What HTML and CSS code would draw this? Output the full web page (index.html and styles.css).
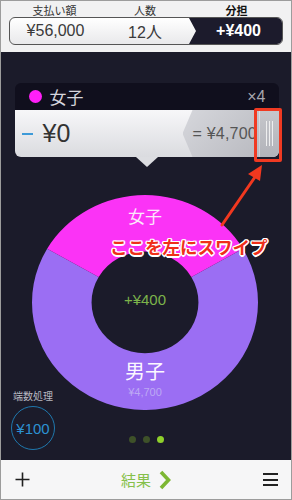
FILE: index.html
```html
<!DOCTYPE html>
<html lang="ja">
<head>
<meta charset="utf-8">
<link rel="stylesheet" href="styles.css">
</head>
<body>
<div class="app">
  <header class="top">
    <div class="labels"><span>支払い額</span><span>人数</span><span class="on">分担</span></div>
    <div class="seg">
      <div class="cell">¥56,000</div>
      <div class="cell">12人</div>
      <div class="cell dark">+¥400</div>
    </div>
  </header>
  <main class="main">
    <section class="card">
      <div class="card-head"><span class="dot"></span><span class="name">女子</span><span class="count">×4</span></div>
      <div class="card-row">
        <span class="minus"></span><span class="amount">¥0</span>
        <div class="share">= ¥4,700</div>
        <div class="handle"><i></i><i></i><i></i></div>
      </div>
    </section>
    <div class="donut">
      <svg class="ring" viewBox="-1 -1 2 2" preserveAspectRatio="none">
        <path fill="#9b6ef3" d="M -0.866 -0.5 L -0.41 -0.237 A 0.473 0.473 0 1 0 0.41 -0.237 L 0.866 -0.5 A 1 1 0 1 1 -0.866 -0.5 Z"/>
        <path fill="#fb33f6" d="M -0.866 -0.5 A 1 1 0 0 1 0.866 -0.5 L 0.41 -0.237 A 0.473 0.473 0 0 0 -0.41 -0.237 Z"/>
      </svg>
      <span class="lbl girls">女子</span>
      <span class="lbl center">+¥400</span>
      <span class="lbl boys">男子</span>
      <span class="lbl boys-amt">¥4,700</span>
    </div>
    <div class="dots"><i></i><i></i><i class="on"></i></div>
    <div class="rounding"><span class="rlabel">端数処理</span><span class="rcircle">¥100</span></div>
    <div class="hl-box"></div>
    <svg class="arrow" width="292" height="408" viewBox="0 0 292 408">
      <line x1="221" y1="173" x2="254" y2="125" stroke="#f2381f" stroke-width="3" stroke-linecap="round"/>
      <polygon points="261,113 259,129 247,122" fill="#f2381f"/>
    </svg>
    <div class="callout">ここを左にスワイプ</div>
  </main>
  <footer class="bar">
    <svg class="plus" width="15" height="15" viewBox="0 0 15 15"><path d="M7.5 0.5V14.5M0.5 7.5H14.5" stroke="#1f1f1f" stroke-width="1.6"/></svg>
    <div class="result"><span>結果</span><svg width="12" height="20" viewBox="0 0 12 20"><path d="M2 2L9.5 10L2 18" fill="none" stroke="#7db733" stroke-width="3.6"/></svg></div>
    <div class="menu"><i></i><i></i><i></i></div>
  </footer>
</div>
</body>
</html>
```
FILE: styles.css
```css
* { box-sizing: border-box; }
html, body { margin: 0; padding: 0; }
body {
  width: 292px; height: 500px;
  font-family: "Liberation Sans", "Noto Sans CJK JP", sans-serif;
  background: #fff;
}
.app {
  position: relative;
  width: 292px; height: 500px;
  border: 1px solid #9c9c9c;
  display: flex; flex-direction: column;
  overflow: hidden;
}
.top {
  height: 51px;
  background: #f1f1f2;
  padding: 2px 8px 0 8px;
}
.labels {
  display: grid;
  grid-template-columns: 91px 90px 1fr;
  height: 14px;
  font-family: "Noto Sans CJK JP", sans-serif;
  font-size: 11px; line-height: 14px;
  color: #333;
  text-align: center;
}
.labels .on { font-weight: 700; color: #111; }
.seg {
  height: 28px;
  border: 1px solid #555;
  border-radius: 6px;
  display: grid;
  grid-template-columns: 91px 88px 1fr;
  background: linear-gradient(#ffffff, #e9e9eb);
  overflow: hidden;
}
.cell {
  display: flex; align-items: center; justify-content: center;
  font-size: 16px; color: #3a3a3a;
}
.cell.dark {
  background: #1c1b2c;
  color: #fff;
  font-weight: 700;
  clip-path: polygon(0 0, 100% 0, 100% 100%, 0 100%, 7px 50%);
  padding-left: 6px;
}
.main {
  position: relative;
  flex: 1;
  background: #1b1b2a;
  display: flex; flex-direction: column; align-items: center;
}
.card {
  position: relative;
  margin-top: 31px;
  width: 264px;
  margin-left: 1px;
}
.card::after {
  content: "";
  position: absolute;
  left: 121px; top: 100%;
  border-left: 11px solid transparent;
  border-right: 11px solid transparent;
  border-top: 10px solid #dcdde1;
}
.card-head {
  height: 27px;
  background: #100f1d;
  border-radius: 6px 6px 0 0;
  display: flex; align-items: center;
  padding: 0 13px 0 14px;
}
.dot {
  width: 13px; height: 13px; border-radius: 50%;
  background: #ff1ff8;
}
.name {
  margin-left: 8px;
  font-family: "Noto Sans CJK JP", sans-serif;
  font-size: 17px; color: #d6d6de;
}
.count {
  margin-left: auto;
  font-size: 16px; color: #a6a6ae;
}
.card-row {
  height: 47px;
  background: linear-gradient(#f7f7f9, #dadbdf);
  border-radius: 0 0 6px 6px;
  display: flex; align-items: center;
  padding-left: 7px;
  overflow: hidden;
}
.minus {
  width: 11px; height: 2px; background: #3d9ad8;
}
.amount {
  margin-left: 10px;
  font-size: 25px; color: #333;
}
.share {
  margin-left: auto;
  width: 77px; height: 100%;
  background: linear-gradient(135deg, #d6d7dc, #b9bac0);
  clip-path: polygon(10px 0, 100% 0, 100% 100%, 10px 100%, 0 50%);
  display: flex; align-items: center;
  padding-left: 10px;
  font-size: 16px; letter-spacing: 0.2px; color: #555;
  white-space: nowrap; overflow: hidden;
}
.handle {
  width: 19px; height: 100%;
  background: linear-gradient(#c6c7cc, #b2b3b9);
  display: flex; justify-content: center; align-items: center; gap: 2px;
}
.handle i {
  display: block; width: 1px; height: 25px; background: #eeeeef;
}
.donut {
  position: relative;
  margin-top: 38px;
  width: 226px; height: 215px;
  margin-left: -2px;
}
.ring { display: block; width: 226px; height: 215px; }
.lbl {
  position: absolute; left: 0; right: 0;
  text-align: center;
  font-family: "Noto Sans CJK JP", sans-serif;
}
.girls { top: 10px; font-size: 17px; line-height: 22px; color: #fbe6fa; }
.center { top: 95px; font-family: "Liberation Sans", sans-serif; font-size: 15px; line-height: 20px; color: #7cb34a; }
.boys { top: 165px; font-size: 20px; line-height: 21px; color: #fbf8ff; }
.boys-amt { top: 191px; font-family: "Liberation Sans", sans-serif; font-size: 11px; line-height: 13px; color: #bda9f3; }
.dots {
  margin-top: 26px;
  display: flex; gap: 7px;
}
.dots i { display: block; width: 7px; height: 7px; border-radius: 50%; background: #3e5129; }
.dots i.on { background: #8fd02b; }
.rounding {
  position: absolute; left: 10px; top: 337px;
  width: 44px;
  display: flex; flex-direction: column; align-items: center; gap: 3px;
}
.rlabel {
  font-family: "Noto Sans CJK JP", sans-serif;
  font-size: 10px; line-height: 14px; color: #b8b8c0;
}
.rcircle {
  width: 44px; height: 44px; border-radius: 50%;
  border: 1px solid #1f78ad;
  display: flex; align-items: center; justify-content: center;
  font-size: 15px; color: #2c92d2;
}
.hl-box {
  position: absolute; left: 253px; top: 56px;
  width: 28px; height: 54px;
  border: 3px solid #f03a22; border-radius: 2px;
}
.arrow { position: absolute; left: 0; top: 0; }
.callout {
  position: absolute; left: 109px; top: 183px;
  font-family: "Noto Sans CJK JP", sans-serif;
  font-size: 17.5px; line-height: 24px; font-weight: 700;
  color: #ef2f1a;
  white-space: nowrap;
  text-shadow: 1.5px 0 #fff, -1.5px 0 #fff, 0 1.5px #fff, 0 -1.5px #fff,
               1px 1px #fff, -1px 1px #fff, 1px -1px #fff, -1px -1px #fff;
}
.bar {
  height: 39px;
  background: #f6f6f7;
  display: flex; align-items: center;
  padding: 0 13px 0 14px;
  position: relative;
}
.plus { display: block; }
.result {
  position: absolute; left: 120px; top: 0; height: 100%;
  display: flex; align-items: center; gap: 8px;
  font-family: "Noto Sans CJK JP", sans-serif;
  font-size: 15px; color: #86c04a;
}
.result svg { display: block; }
.menu { margin-left: auto; display: flex; flex-direction: column; gap: 3.5px; }
.menu i { display: block; width: 15px; height: 2px; background: #222; }
```
